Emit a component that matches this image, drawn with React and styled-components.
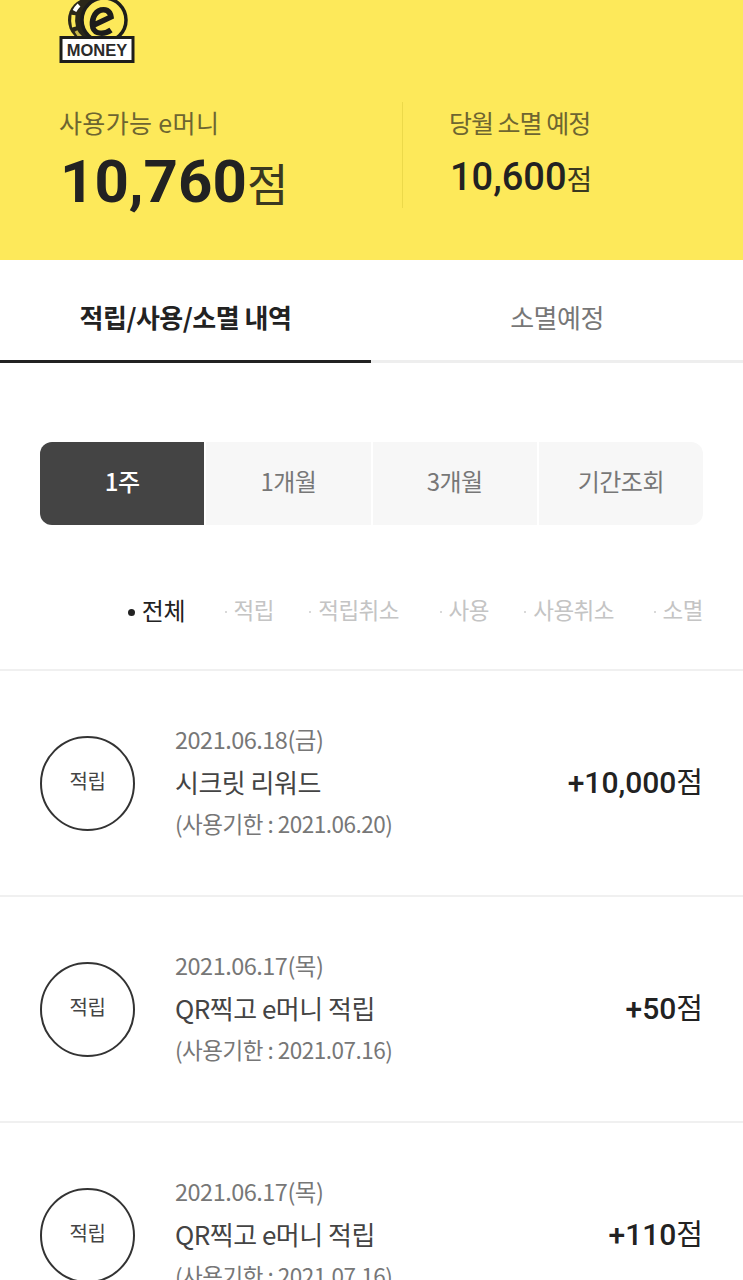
import styled, { createGlobalStyle } from 'styled-components'

const GlobalStyle = createGlobalStyle`
  html, body { margin: 0; padding: 0; background: #fff; }
  body { font-family: "Noto Sans CJK KR", "Noto Sans", sans-serif; height: 1280px; overflow: hidden; letter-spacing: -0.5px; }
`

// $w is the distance from the end of the previous label to the end of this one
const filters = [
  { label: '전체', active: true, w: 60 },
  { label: '적립', w: 89 },
  { label: '적립취소', w: 125 },
  { label: '사용', w: 90 },
  { label: '사용취소', w: 125 },
  { label: '소멸', w: 89 },
]

const rows = [
  { date: '2021.06.18(금)', title: '시크릿 리워드', limit: '(사용기한 : 2021.06.20)', point: '+10,000' },
  { date: '2021.06.17(목)', title: 'QR찍고 e머니 적립', limit: '(사용기한 : 2021.07.16)', point: '+50' },
  { date: '2021.06.17(목)', title: 'QR찍고 e머니 적립', limit: '(사용기한 : 2021.07.16)', point: '+110' },
]

function Logo() {
  return (
    <LogoSvg width="76" height="64" viewBox="0 0 76 64">
      <ellipse cx="30" cy="20" rx="21" ry="22" fill="#2a2719" />
      <path d="M20 5 Q17 8 15.5 11" fill="none" stroke="#fff" strokeWidth="4" />
      <path d="M14.5 15 Q13.5 21 15 27" fill="none" stroke="#fde95a" strokeWidth="4" />
      <path d="M17 31 Q19 35 22 37" fill="none" stroke="#c9b94a" strokeWidth="3" />
      <circle cx="45" cy="20" r="22" fill="#fde95a" stroke="#1d1d1b" strokeWidth="3.5" />
      <path d="M35 25 L52 17 C51 10 46 9 42 10 C35 12 32 21 34 28 C36 34 45 35 52 30" fill="none" stroke="#1d1d1b" strokeWidth="5.5" />
      <rect x="2" y="37.5" width="72" height="24" fill="#fff" stroke="#1d1d1b" strokeWidth="3" />
      <LogoText x="38" y="55.5" textAnchor="middle">MONEY</LogoText>
    </LogoSvg>
  )
}

function App() {
  return (
    <Page>
      <GlobalStyle />
      <Hero>
        <Logo />
        <Balances>
          <MainBalance>
            <BalanceLabel $spacing="0.35px">사용가능 e머니</BalanceLabel>
            <BigAmount>10,760<BigUnit>점</BigUnit></BigAmount>
          </MainBalance>
          <SideBalance>
            <BalanceLabel $spacing="-1px">당월 소멸 예정</BalanceLabel>
            <SmallAmount>10,600<SmallUnit>점</SmallUnit></SmallAmount>
          </SideBalance>
        </Balances>
      </Hero>
      <Tabs>
        <Tab $active>적립/사용/소멸 내역</Tab>
        <Tab>소멸예정</Tab>
      </Tabs>
      <Periods>
        <Period $active>1주</Period>
        <Period>1개월</Period>
        <Period>3개월</Period>
        <Period>기간조회</Period>
      </Periods>
      <Filters>
        {filters.map((f) => (
          <Filter key={f.label} $active={f.active} $w={f.w}>
            <Dot $active={f.active} />
            {f.label}
          </Filter>
        ))}
      </Filters>
      {rows.map((r, i) => (
        <Row key={i}>
          <Badge>적립</Badge>
          <Info>
            <DateText>{r.date}</DateText>
            <Title>{r.title}</Title>
            <Limit>{r.limit}</Limit>
          </Info>
          <Point>{r.point}<PointUnit>점</PointUnit></Point>
        </Row>
      ))}
    </Page>
  )
}

export default App

const Page = styled.div`
  width: 743px;
  height: 1280px;
  overflow: hidden;
`
const Hero = styled.div`
  height: 260px;
  background: #fde95a;
  box-sizing: border-box;
  padding: 0 0 0 59px;
  display: flex;
  flex-direction: column;
`
const LogoSvg = styled.svg`
  display: block;
  height: 64px;
  flex: none;
`
const LogoText = styled.text`
  font-family: "Liberation Sans", sans-serif;
  font-weight: 700;
  font-size: 16.5px;
  letter-spacing: 0;
  fill: #2a2a2a;
`
const Balances = styled.div`
  display: flex;
  margin-top: 38px;
  height: 106px;
`
const MainBalance = styled.div`
  width: 343px;
  border-right: 1px solid #ecd94a;
`
const SideBalance = styled.div`
  padding-left: 46px;
`
const BalanceLabel = styled.div`
  font-size: 25px;
  line-height: 40px;
  color: #6d6531;
  letter-spacing: ${({ $spacing }) => $spacing};
`
const BigAmount = styled.div`
  font-family: Roboto, sans-serif;
  font-size: 60px;
  line-height: 80px;
  font-weight: 700;
  color: #222;
  margin-left: 1px;
  letter-spacing: 0;
`
const BigUnit = styled.span`
  font-family: "Noto Sans CJK KR", sans-serif;
  font-size: 45px;
  font-weight: 400;
  color: #3a3820;
`
const SmallAmount = styled.div`
  font-family: Roboto, sans-serif;
  font-size: 38px;
  line-height: 70px;
  font-weight: 500;
  color: #222;
  margin-left: 1px;
  letter-spacing: 0;
`
const SmallUnit = styled.span`
  font-family: "Noto Sans CJK KR", sans-serif;
  font-size: 28px;
  font-weight: 400;
  color: #3a3820;
`
const Tabs = styled.div`
  display: flex;
  height: 103px;
  box-sizing: border-box;
  border-bottom: 3px solid #eee;
`
const Tab = styled.div`
  height: 103px;
  box-sizing: border-box;
  width: ${({ $active }) => ($active ? '371px' : '372px')};
  display: flex;
  align-items: center;
  justify-content: center;
  padding-top: 12px;
  font-size: 26px;
  font-weight: ${({ $active }) => ($active ? 700 : 400)};
  color: ${({ $active }) => ($active ? '#222' : '#777')};
  border-bottom: 3px solid ${({ $active }) => ($active ? '#222' : '#eee')};
`
const Periods = styled.div`
  display: flex;
  margin: 79px 40px 0;
  height: 83px;
  border-radius: 12px;
  overflow: hidden;
  gap: 2px;
`
const Period = styled.div`
  flex: 1;
  display: flex;
  align-items: center;
  justify-content: center;
  padding-bottom: 6px;
  font-size: 24px;
  background: ${({ $active }) => ($active ? '#444' : '#f7f7f7')};
  color: ${({ $active }) => ($active ? '#fff' : '#777')};
  font-weight: ${({ $active }) => ($active ? 500 : 400)};
`
const Filters = styled.div`
  display: flex;
  justify-content: flex-end;
  margin: 66px 40px 38px 0;
  height: 40px;
  padding-bottom: 4px;
  box-sizing: border-box;
  align-items: center;
`
const Filter = styled.div`
  width: ${({ $w }) => $w}px;
  display: flex;
  align-items: center;
  justify-content: flex-end;
  font-size: ${({ $active }) => ($active ? '24px' : '22.5px')};
  color: ${({ $active }) => ($active ? '#222' : '#c4c4c4')};
`
const Dot = styled.span`
  width: ${({ $active }) => ($active ? '7px' : '2px')};
  height: ${({ $active }) => ($active ? '7px' : '2px')};
  border-radius: 50%;
  background: ${({ $active }) => ($active ? '#222' : '#ccc')};
  margin: 6px 7px 0 0;
`
const Row = styled.div`
  height: 226px;
  box-sizing: border-box;
  border-top: 2px solid #f0f0f0;
  display: flex;
  padding: 0 40px;
  align-items: flex-start;
`
const Badge = styled.div`
  width: 95px;
  height: 95px;
  margin-top: 65px;
  box-sizing: border-box;
  border: 2px solid #333;
  border-radius: 50%;
  display: flex;
  align-items: center;
  justify-content: center;
  font-size: 20px;
  color: #444;
  flex: none;
  padding-bottom: 6px;
`
const Info = styled.div`
  margin: 48px 0 0 40px;
  flex: 1;
`
const DateText = styled.div`
  font-size: 23.5px;
  line-height: 41px;
  color: #777;
`
const Title = styled.div`
  font-size: 26px;
  line-height: 44px;
  color: #444;
`
const Limit = styled.div`
  font-size: 22.5px;
  line-height: 38px;
  color: #777;
`
const Point = styled.div`
  margin-top: 86px;
  font-family: Roboto, sans-serif;
  font-weight: 500;
  font-size: 30px;
  line-height: 46px;
  color: #222;
  letter-spacing: 0;
`
const PointUnit = styled.span`
  font-family: "Noto Sans CJK KR", sans-serif;
  font-weight: 400;
  font-size: 29px;
`
